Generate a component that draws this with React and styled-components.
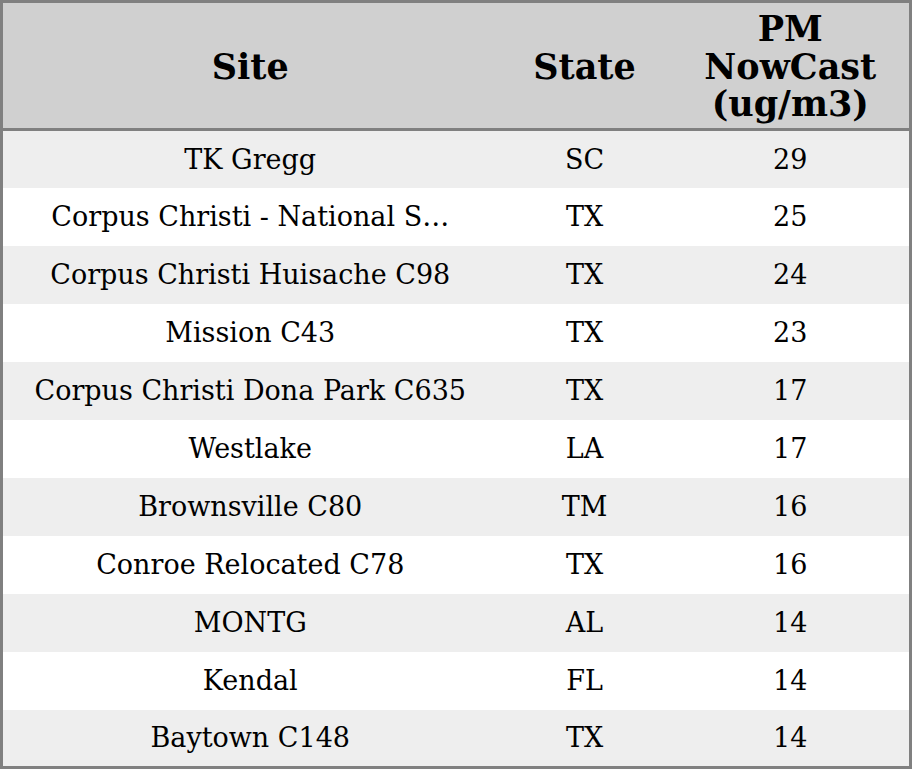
import React from 'react';
import styled, { createGlobalStyle } from 'styled-components';

const GlobalStyle = createGlobalStyle`
  html, body {
    margin: 0;
    padding: 0;
    background: #fff;
  }
  body {
    font-family: "DejaVu Serif", "Liberation Serif", serif;
    color: #000;
  }
`;

const Table = styled.table`
  width: 912px;
  height: 769px;
  border-collapse: collapse;
  table-layout: fixed;
  border: 3px solid #808080;
  box-sizing: border-box;
`;

const HeadRow = styled.tr`
  background: #d0d0d0;
  border-bottom: 3px solid #808080;
  height: 128px;
`;

const HeadCell = styled.th`
  font-size: 35px;
  font-weight: bold;
  line-height: 37.5px;
  text-align: center;
  vertical-align: middle;
  padding: 2px 8px 0;
`;

const Row = styled.tr`
  background: ${(p) => (p.$odd ? '#eeeeee' : '#ffffff')};
  height: 57.6px;
`;

const Cell = styled.td`
  font-size: 27px;
  text-align: center;
  vertical-align: middle;
  padding: 0 8px;
  white-space: nowrap;
`;

const MAX_NAME = 30;

const shorten = (name) =>
  name.length > MAX_NAME ? `${name.slice(0, 27)}…` : name;

const rows = [
  ['TK Gregg', 'SC', 29],
  ['Corpus Christi - National Seashore', 'TX', 25],
  ['Corpus Christi Huisache C98', 'TX', 24],
  ['Mission C43', 'TX', 23],
  ['Corpus Christi Dona Park C635', 'TX', 17],
  ['Westlake', 'LA', 17],
  ['Brownsville C80', 'TM', 16],
  ['Conroe Relocated C78', 'TX', 16],
  ['MONTG', 'AL', 14],
  ['Kendal', 'FL', 14],
  ['Baytown C148', 'TX', 14],
];

const App = () => (
  <>
    <GlobalStyle />
    <Table>
      <colgroup>
        <col style={{ width: 496 }} />
        <col style={{ width: 174 }} />
        <col />
      </colgroup>
      <thead>
        <HeadRow>
          <HeadCell>Site</HeadCell>
          <HeadCell>State</HeadCell>
          <HeadCell>
            PM
            <br />
            NowCast
            <br />
            (ug/m3)
          </HeadCell>
        </HeadRow>
      </thead>
      <tbody>
        {rows.map(([site, state, value], i) => (
          <Row key={site} $odd={i % 2 === 0}>
            <Cell title={site}>{shorten(site)}</Cell>
            <Cell>{state}</Cell>
            <Cell>{value}</Cell>
          </Row>
        ))}
      </tbody>
    </Table>
  </>
);

export default App;
